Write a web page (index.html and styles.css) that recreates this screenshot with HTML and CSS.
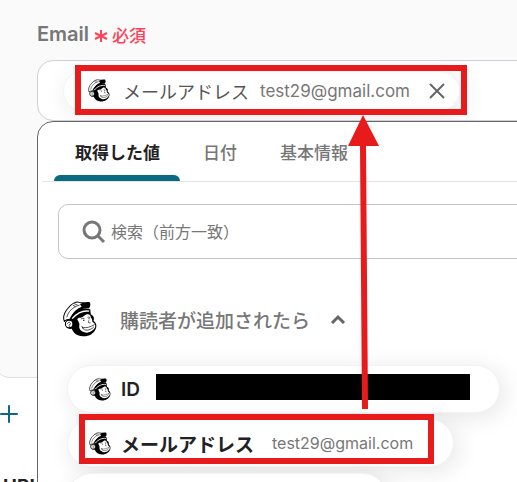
FILE: index.html
```html
<!DOCTYPE html>
<html lang="ja">
<head>
<meta charset="utf-8">
<meta name="viewport" content="width=device-width, initial-scale=1">
<title>Email</title>
<link rel="stylesheet" href="styles.css">
</head>
<body>
<svg class="defs" aria-hidden="true">
  <symbol id="chimp" viewBox="0 0 100 106">
    <path fill="#000" d="M25 42C40 26 60 18 80 24L82 40C92 44 92 52 90 58C98 64 100 72 97 80C92 96 76 105 58 104C40 103 30 94 26 82C14 84 5 76 7 65C8 58 14 54 20 54Z"/>
    <path fill="#fff" stroke="#000" stroke-width="3" d="M4 60C-1 48 4 34 14 22C25 8 39 1 48 4C52 6 57 4 62 6L57 19C43 25 29 35 20 54C14 54 8 56 4 60Z"/>
    <path fill="#000" d="M50 9C60 3 71 1 79 4C82 11 80 18 76 22C63 20 48 26 33 38L26 45C31 30 43 22 55 18Z"/>
    <path fill="none" stroke="#000" stroke-width="2" d="M11 48C15 31 29 17 49 12M29 12L37 17M33 8L43 12"/>
    <path fill="none" stroke="#fff" stroke-width="4" d="M27 52C42 35 60 27 77 30"/>
    <path fill="#fff" d="M50 49C57 50 61 44 68 40C76 36 82 42 82 49C87 52 85 58 87 62C94 65 97 73 94 79C87 90 73 96 63 92C52 88 46 82 48 72C50 66 44 60 42 54C44 50 47 49 50 49Z"/>
    <circle cx="18" cy="68" r="11" fill="#fff" stroke="#000" stroke-width="3"/>
    <path fill="none" stroke="#000" stroke-width="2" d="M13 67C16 59 24 64 21 69C17 68 17 76 21 75"/>
    <path fill="none" stroke="#000" stroke-width="2" d="M53 53Q58 49 63 52M72 48Q76 46 79 49M76 57Q72 66 81 64M56 77C68 81 82 76 93 69M58 79C61 89 80 88 91 76M55 74L59 81"/>
    <path fill="#000" d="M59 55h4v3h-4zM75 51h3v3h-3z"/>
  </symbol>
</svg>
<main class="page">
  <section class="card">
    <div class="label-row">
      <span class="label">Email</span>
      <svg class="star" viewBox="0 0 14 14" aria-hidden="true"><path d="M7 1v12M1 4l12 6M13 4l-12 6"/></svg>
      <span class="required">必須</span>
    </div>
    <div class="picker">
      <div class="field">
        <div class="chip chip-selected">
          <svg class="chimp-small" aria-hidden="true"><use href="#chimp"/></svg>
          <span class="chip-name">メールアドレス</span>
          <span class="chip-value">test29@gmail.com</span>
          <button class="remove" type="button" aria-label="削除"><svg viewBox="0 0 16 16"><path d="M1 1l14 14M15 1L1 15"/></svg></button>
        </div>
      </div>
      <div class="menu">
        <div class="tabs" role="tablist">
          <button class="tab active" type="button" role="tab" aria-selected="true">取得した値</button>
          <button class="tab" type="button" role="tab" aria-selected="false">日付</button>
          <button class="tab" type="button" role="tab" aria-selected="false">基本情報</button>
        </div>
        <label class="search">
          <svg viewBox="0 0 24 24" aria-hidden="true"><circle cx="10" cy="10" r="8"/><path d="M16 16l6 6"/></svg>
          <input type="search" placeholder="検索（前方一致）" aria-label="検索（前方一致）">
        </label>
        <button class="group" type="button" aria-expanded="true">
          <svg class="chimp-large" aria-hidden="true"><use href="#chimp"/></svg>
          <span>購読者が追加されたら</span>
          <svg class="chevron" viewBox="0 0 16 10" aria-hidden="true"><path d="M2 9l6-6 6 6"/></svg>
        </button>
        <div class="options">
          <button class="chip option" type="button">
            <svg class="chimp-small" aria-hidden="true"><use href="#chimp"/></svg>
            <span class="option-name">ID</span>
            <span class="redacted"></span>
          </button>
          <button class="chip option" type="button">
            <svg class="chimp-small" aria-hidden="true"><use href="#chimp"/></svg>
            <span class="option-name">メールアドレス</span>
            <span class="option-value">test29@gmail.com</span>
          </button>
          <button class="chip option option-next" type="button" aria-label="次の項目"></button>
        </div>
      </div>
    </div>
  </section>
  <button class="add" type="button" aria-label="追加"><svg viewBox="0 0 18 18"><path d="M9 1v16M1 9h16"/></svg></button>
  <p class="url">URL</p>
  <div class="mark mark-field"></div>
  <div class="mark mark-option"></div>
  <svg class="arrow" viewBox="0 0 32 294" aria-hidden="true"><path d="M15 0L31 31H18L20 294H14L12 31H0Z"/></svg>
</main>
</body>
</html>
```
FILE: styles.css
```css
* { box-sizing: border-box; }
body {
  margin: 0;
  background: #fff;
  color: #777;
  font-family: Inter, "Noto Sans CJK JP", sans-serif;
  font-size: 16px;
}
button {
  margin: 0;
  padding: 0;
  border: 0;
  background: none;
  color: inherit;
  font: inherit;
}
svg { flex: none; fill: none; }
.defs { position: absolute; width: 0; height: 0; }
.page { position: relative; height: 100vh; overflow: hidden; }
.card {
  height: 378px;
  margin-left: -6px;
  padding: 20px 0 0 42px;
  border: 1px solid #e0e0e0;
  border-top: 0;
  border-right: 0;
  border-radius: 0 0 0 16px;
  background: #fafafa;
}
.label-row { display: flex; align-items: center; height: 28px; }
.label { font-size: 20px; font-weight: 600; }
.star { width: 14px; height: 14px; margin: 4px 4px 0 5px; stroke: #ff4258; stroke-width: 2; }
.required { color: #ff4258; font-size: 17px; font-weight: 500; }
.picker { position: relative; margin-top: 12px; }
.field {
  display: flex;
  align-items: center;
  height: 61px;
  margin-right: -20px;
  padding-left: 25px;
  border: 1px solid #cdd0d8;
  border-radius: 16px;
  background: #fff;
  overflow: hidden;
}
.chip {
  display: flex;
  align-items: center;
  border: 1px solid #f3f3f3;
  background: #fff;
  box-shadow: 4px 4px 24px rgba(0, 0, 0, 0.1);
}
.chip-selected { height: 40px; padding: 0 14px 0 24px; border-radius: 20px; }
.chimp-small { width: 22px; height: 23px; }
.chip-name { margin-left: 13px; color: #555; font-size: 18px; }
.chip-value { margin-left: 11px; font-size: 17px; }
.remove { width: 16px; height: 16px; margin-left: 19px; }
.remove svg { display: block; stroke: #666; stroke-width: 2; }
.menu {
  position: absolute;
  top: 61px;
  left: 0;
  right: -20px;
  height: 440px;
  border: 1px solid #666;
  border-radius: 16px;
  background: #fff;
  overflow: hidden;
}
.tabs {
  display: flex;
  gap: 2px;
  height: 60px;
  margin-left: 4px;
  padding-left: 12px;
  border-bottom: 1px solid #e3e3e3;
}
.tab { position: relative; padding: 0 20px 0 21px; font-size: 17px; font-weight: 500; white-space: nowrap; }
.tab.active { color: #222; font-weight: 600; }
.tab.active::after {
  content: "";
  position: absolute;
  left: 0;
  right: 0;
  bottom: 0;
  height: 6px;
  border-radius: 6px 6px 0 0;
  background: #0b6983;
}
.search {
  display: flex;
  align-items: center;
  gap: 5px;
  height: 55px;
  margin: 22px 0 0 20px;
  padding-left: 23px;
  border: 1px solid #c4c4c4;
  border-radius: 10px;
}
.search svg { width: 24px; height: 24px; stroke: #777; stroke-width: 3; }
.search input {
  width: 100%;
  min-width: 0;
  padding: 0;
  border: 0;
  outline: 0;
  background: none;
  font: inherit;
}
.search input::placeholder { color: #777; opacity: 1; }
.group { display: flex; align-items: center; height: 36px; margin: 42px 0 0 25px; font-size: 19px; font-weight: 500; }
.chimp-large { width: 34px; height: 36px; margin-right: 23px; }
.chevron { width: 16px; height: 10px; margin-left: 20px; stroke: #666; stroke-width: 3; }
.options { display: flex; flex-direction: column; align-items: flex-start; gap: 6px; margin: 28px 0 0 29px; }
.option { height: 48px; padding: 0 40px 0 21px; border-radius: 24px; }
.option-name { margin-left: 10px; color: #222; font-size: 19px; font-weight: 600; }
.option-value { margin-left: 18px; }
.redacted { width: 314px; height: 26px; margin: -5px -11px 0 16px; background: #000; }
.option-next { width: 320px; }
.add { position: absolute; top: 405px; left: 0; width: 18px; height: 18px; }
.add svg { display: block; stroke: #0b6983; stroke-width: 2; stroke-linecap: round; }
.url { margin: 97px 0 0 3px; color: #222; font-size: 19px; font-weight: 700; line-height: 24px; }
.mark { position: absolute; height: 50px; border: 6px solid #e71b1b; }
.mark-field { top: 65px; left: 75px; width: 392px; }
.mark-option { top: 414px; left: 79px; width: 355px; }
.arrow { position: absolute; top: 115px; left: 348px; width: 32px; height: 294px; fill: #e71b1b; }
```
